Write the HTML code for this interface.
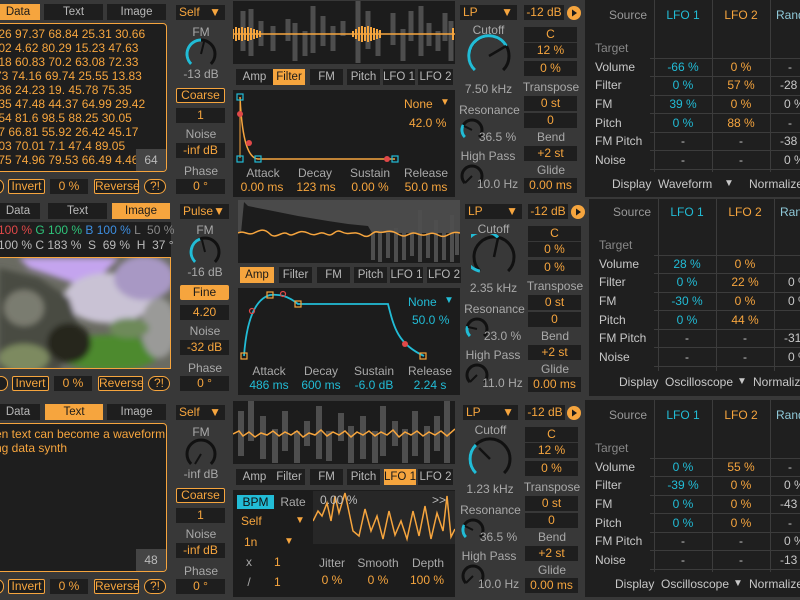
<!DOCTYPE html>
<html><head><meta charset="utf-8">
<style>
*{box-sizing:border-box;margin:0;padding:0}
body{width:800px;height:600px;overflow:hidden;background:#383838;font-family:"Liberation Sans",sans-serif;font-size:12px;position:relative;white-space:nowrap}
.row{position:absolute;left:0;top:0;width:800px;height:200px}
.a{position:absolute}
.bx{position:absolute;background:#1e1e1e;color:#f6a53e;text-align:center;font-size:12px;line-height:15px;height:15px}
.ob{position:absolute;border:1px solid #f6a53e;color:#f6a53e;background:#1e1e1e;text-align:center;font-size:12px;line-height:13px;height:15px;border-radius:2px}
.on{background:#f6a53e !important;color:#1a1a1a !important}
.tab{position:absolute;background:#1e1e1e;color:#b8b8b8;text-align:center;font-size:11.5px;line-height:16px;height:16px;overflow:hidden}
.lb{position:absolute;color:#a9a9a9;text-align:center;font-size:12px;line-height:14px}
.or{color:#f6a53e}.cy{color:#22bcd6}.wh{color:#c8c8c8}
.dark{position:absolute;background:#1c1c1c}
.mm{position:absolute;left:585px;top:0;width:230px;height:197px;background:#1f1f1f}
.vl{position:absolute;top:0;width:1px;height:172px;background:#3c3c3c}
.hl{position:absolute;left:65px;width:170px;height:1px;background:#3c3c3c}
.mt{position:absolute;font-size:12px;line-height:14px;color:#c8c8c8}
.mv{position:absolute;width:58px;text-align:center;font-size:12px;line-height:14px}
.data{position:absolute;color:#f6a53e;font-size:12px;line-height:14px;white-space:nowrap}
</style></head><body>

<!-- ================= ROW 1 ================= -->
<div class="row" style="top:0">
  <div class="tab on" style="left:-4px;top:4px;width:44px">Data</div>
  <div class="tab" style="left:44px;top:4px;width:59px">Text</div>
  <div class="tab" style="left:107px;top:4px;width:59px">Image</div>
  <div class="a" style="left:-6px;top:23px;width:173px;height:149px;border:1px solid #f6a53e;border-radius:4px;background:#1e1e1e;overflow:hidden">
    <div class="data" style="left:0;top:3px;line-height:14px">.26 97.37 68.84 25.31 30.66<br>.02 4.62 80.29 15.23 47.63<br>.18 60.83 70.2 63.08 72.33<br>73 74.16 69.74 25.55 13.83<br>.36 24.23 19. 45.78 75.35<br>.35 47.48 44.37 64.99 29.42<br>.54 81.6 98.5 88.25 30.05<br>.7 66.81 55.92 26.42 45.17<br>.03 70.01 7.1 47.4 89.05<br>.75 74.96 79.53 66.49 4.46</div>
    <div class="a" style="left:141px;top:125px;width:30px;height:22px;background:#444;color:#bbb;text-align:center;line-height:22px">64</div>
  </div>
  <div class="ob" style="left:-10px;top:179px;width:14px;border-radius:8px"></div>
  <div class="ob" style="left:8px;top:179px;width:37px">Invert</div>
  <div class="bx" style="left:50px;top:179px;width:38px">0 %</div>
  <div class="ob" style="left:94px;top:179px;width:45px">Reverse</div>
  <div class="ob" style="left:144px;top:179px;width:22px;border-radius:8px">?!</div>

  <div class="bx" style="left:176px;top:5px;width:49px;text-align:left;padding-left:3px">Self<span style="position:absolute;right:4px">▼</span></div>
  <div class="lb" style="left:176px;top:25px;width:50px">FM</div>
  <svg class="a" style="left:183px;top:36px" width="36" height="36" viewBox="-18 -18 36 36"><path d="M-9.9,9.9 A14,14 0 1 1 9.9,9.9" fill="none" stroke="#111" stroke-width="3"/><path d="M-9.9,9.9 A14,14 0 0 1 0,-14" fill="none" stroke="#22bcd6" stroke-width="3"/><path d="M0 0L3 -12" stroke="#111" stroke-width="2"/></svg>
  <div class="lb" style="left:176px;top:67px;width:50px">-13 dB</div>
  <div class="ob" style="left:176px;top:88px;width:49px">Coarse</div>
  <div class="bx" style="left:176px;top:108px;width:49px">1</div>
  <div class="lb" style="left:176px;top:127px;width:50px">Noise</div>
  <div class="bx" style="left:176px;top:143px;width:49px">-inf dB</div>
  <div class="lb" style="left:176px;top:164px;width:50px">Phase</div>
  <div class="bx" style="left:176px;top:179px;width:49px">0 °</div>

  <svg class="a" style="left:233px;top:1px" width="222" height="63"><rect width="222" height="63" fill="#1c1c1c"/><g stroke="#4e4e4e" stroke-width="5"><path d="M10 10V50M18 8V55M28 20V45M40 25V50M55 18V40M62 22V60M72 30V55M80 5V52M90 15V45M100 25V50M110 20V35M125 0V62M135 10V48M145 30V55M160 12V44M170 28V60M178 10V40M188 5V55M196 22V45M205 30V50M212 12V40M218 20V60"/></g><path d="M0 33H222" stroke="#f6a53e" stroke-width="1.5"/><path d="M0 28V38M3 26V40M6 27V39M9 26V40M12 27V39M15 26V40M18 27V39M21 28V38M24 29V37M27 30V36M120 30V36M123 28V38M126 26V40M129 25V41M132 26V40M135 25V41M138 26V40M141 27V39M144 28V38M147 29V37M220 27V39" stroke="#f6a53e" stroke-width="2"/></svg>

  <div class="tab" style="left:236px;top:69px;width:37px">Amp</div>
  <div class="tab on" style="left:273px;top:69px;width:32px">Filter</div>
  <div class="tab" style="left:310px;top:69px;width:33px">FM</div>
  <div class="tab" style="left:347px;top:69px;width:33px">Pitch</div>
  <div class="tab" style="left:383px;top:69px;width:32px">LFO 1</div>
  <div class="tab" style="left:418px;top:69px;width:35px">LFO 2</div>

  <div class="dark" style="left:233px;top:90px;width:222px;height:107px"></div>
  <svg class="a" style="left:233px;top:90px" width="222" height="107"><path d="M7 7C9 50 15 68 25 69L162 69" fill="none" stroke="#f6a53e" stroke-width="1.5"/><path d="M7 7V68" stroke="#f6a53e" stroke-width="1"/><g fill="none" stroke="#22bcd6" stroke-width="1.2"><rect x="4" y="4" width="6" height="6"/><rect x="4" y="66" width="6" height="6"/><rect x="22" y="66" width="6" height="6"/><rect x="159" y="66" width="6" height="6"/></g><g fill="#e04848"><circle cx="7" cy="24" r="3"/><circle cx="16" cy="53" r="3"/><circle cx="154" cy="69" r="3"/></g></svg>
  <div class="a or" style="left:404px;top:97px">None</div><div class="a or" style="left:440px;top:97px;font-size:10px">▼</div>
  <div class="a or" style="left:409px;top:116px">42.0 %</div>
  <div class="lb" style="left:238px;top:166px;width:50px">Attack</div>
  <div class="lb" style="left:290px;top:166px;width:50px">Decay</div>
  <div class="lb" style="left:345px;top:166px;width:50px">Sustain</div>
  <div class="lb" style="left:401px;top:166px;width:50px">Release</div>
  <div class="lb or" style="left:233px;top:180px;width:58px">0.00 ms</div>
  <div class="lb or" style="left:287px;top:180px;width:58px">123 ms</div>
  <div class="lb or" style="left:341px;top:180px;width:58px">0.00 %</div>
  <div class="lb or" style="left:397px;top:180px;width:58px">50.0 ms</div>

  <div class="bx" style="left:460px;top:5px;width:57px;text-align:left;padding-left:3px">LP<span style="position:absolute;right:4px">▼</span></div>
  <div class="bx" style="left:524px;top:5px;width:40px">-12 dB</div>
  <svg class="a" style="left:567px;top:6px" width="14" height="14"><circle cx="7" cy="7" r="7" fill="#f6a53e"/><path d="M5 3.5L10 7L5 10.5Z" fill="#1a1a1a"/></svg>
  <div class="lb" style="left:460px;top:23px;width:57px">Cutoff</div>
  <svg class="a" style="left:466px;top:33px" width="46" height="46" viewBox="-23 -23 46 46"><path d="M-14.1,14.1 A20,20 0 1 1 14.1,14.1" fill="none" stroke="#111" stroke-width="3"/><path d="M-14.1,14.1 A20,20 0 1 1 17.3,-10" fill="none" stroke="#22bcd6" stroke-width="3"/><path d="M0 0L17 -10" stroke="#111" stroke-width="2.5"/></svg>
  <div class="lb" style="left:460px;top:82px;width:57px">7.50 kHz</div>
  <div class="lb" style="left:458px;top:103px;width:63px">Resonance</div>
  <svg class="a" style="left:459px;top:117px" width="26" height="26" viewBox="-13 -13 26 26"><path d="M-7.1,7.1 A10,10 0 1 1 7.1,7.1" fill="none" stroke="#111" stroke-width="3"/><path d="M-7.1,7.1 A10,10 0 0 1 -8.7,-5" fill="none" stroke="#22bcd6" stroke-width="3"/><path d="M0 0L-8 -4" stroke="#111" stroke-width="2"/></svg>
  <div class="lb" style="left:475px;top:130px;width:45px">36.5 %</div>
  <div class="lb" style="left:458px;top:149px;width:60px">High Pass</div>
  <svg class="a" style="left:459px;top:163px" width="26" height="26" viewBox="-13 -13 26 26"><path d="M-7.1,7.1 A10,10 0 1 1 7.1,7.1" fill="none" stroke="#111" stroke-width="3"/><path d="M0 0L-7 7" stroke="#111" stroke-width="2"/></svg>
  <div class="lb" style="left:475px;top:177px;width:45px">10.0 Hz</div>

  <div class="bx" style="left:524px;top:27px;width:53px">C</div>
  <div class="bx" style="left:524px;top:43px;width:53px">12 %</div>
  <div class="bx" style="left:524px;top:61px;width:53px">0 %</div>
  <div class="lb" style="left:522px;top:80px;width:58px">Transpose</div>
  <div class="bx" style="left:524px;top:96px;width:53px">0 st</div>
  <div class="bx" style="left:524px;top:113px;width:53px">0</div>
  <div class="lb" style="left:522px;top:130px;width:58px">Bend</div>
  <div class="bx" style="left:524px;top:146px;width:53px">+2 st</div>
  <div class="lb" style="left:522px;top:163px;width:58px">Glide</div>
  <div class="bx" style="left:524px;top:178px;width:53px">0.00 ms</div>

  <div class="mm">
    <div class="vl" style="left:69px"></div><div class="vl" style="left:127px"></div><div class="vl" style="left:185px"></div>
    <div class="hl" style="top:58px"></div><div class="hl" style="top:76px"></div><div class="hl" style="top:95px"></div><div class="hl" style="top:113px"></div><div class="hl" style="top:132px"></div><div class="hl" style="top:150px"></div><div class="hl" style="top:169px"></div>
    <div class="mt" style="left:24px;top:8px;color:#999">Source</div>
    <div class="mv cy" style="left:69px;top:8px">LFO 1</div><div class="mv or" style="left:127px;top:8px">LFO 2</div><div class="mv" style="left:185px;top:8px;text-align:left;padding-left:6px;color:#8fc8d8">Rand</div>
    <div class="mt" style="left:10px;top:41px;color:#888">Target</div>
    <div class="mt" style="left:10px;top:60px">Volume</div><div class="mt" style="left:10px;top:78px">Filter</div><div class="mt" style="left:10px;top:97px">FM</div><div class="mt" style="left:10px;top:116px">Pitch</div><div class="mt" style="left:10px;top:134px">FM Pitch</div><div class="mt" style="left:10px;top:153px">Noise</div>
    <div class="mv cy" style="left:69px;top:60px">-66 %</div><div class="mv or" style="left:127px;top:60px">0 %</div><div class="mv wh" style="left:185px;top:60px;text-align:left;padding-left:18px">-</div>
    <div class="mv cy" style="left:69px;top:78px">0 %</div><div class="mv or" style="left:127px;top:78px">57 %</div><div class="mv wh" style="left:185px;top:78px;text-align:left;padding-left:10px">-28</div>
    <div class="mv cy" style="left:69px;top:97px">39 %</div><div class="mv or" style="left:127px;top:97px">0 %</div><div class="mv wh" style="left:185px;top:97px;text-align:left;padding-left:14px">0 %</div>
    <div class="mv cy" style="left:69px;top:116px">0 %</div><div class="mv or" style="left:127px;top:116px">88 %</div><div class="mv wh" style="left:185px;top:116px;text-align:left;padding-left:18px">-</div>
    <div class="mv wh" style="left:69px;top:134px">-</div><div class="mv wh" style="left:127px;top:134px">-</div><div class="mv wh" style="left:185px;top:134px;text-align:left;padding-left:10px">-38</div>
    <div class="mv wh" style="left:69px;top:153px">-</div><div class="mv wh" style="left:127px;top:153px">-</div><div class="mv wh" style="left:185px;top:153px;text-align:left;padding-left:14px">0 %</div>
    <div class="mt" style="left:27px;top:177px">Display</div><div class="mt" style="left:73px;top:177px">Waveform</div><div class="mt" style="left:139px;top:177px;font-size:10px">▼</div><div class="mt" style="left:164px;top:177px">Normalize</div>
  </div>
</div>

<!-- ================= ROW 2 ================= -->
<div class="row" style="top:199px;left:4px">
  <div class="tab" style="left:-8px;top:4px;width:44px">Data</div>
  <div class="tab" style="left:44px;top:4px;width:59px">Text</div>
  <div class="tab on" style="left:108px;top:4px;width:58px">Image</div>
  <div class="dark" style="left:-6px;top:23px;width:173px;height:35px;background:#1e1e1e"></div>
  <div class="a" style="left:-6px;top:24px;font-size:12px;line-height:15px;white-space:nowrap"><span style="color:#e04848">100 %</span> <span style="color:#2ec47a">G 100 %</span> <span style="color:#3d8ee0">B 100 %</span> <span style="color:#888">L &nbsp;50 %</span><br><span style="color:#bbb">100 % C 183 % &nbsp;S &nbsp;69 % &nbsp;H &nbsp;37 °</span></div>
  <div class="a" style="left:-6px;top:58px;width:173px;height:112px;border:1px solid #f6a53e;overflow:hidden;background:#6a6a5e">
    <svg width="173" height="112"><defs><filter id="bl"><feGaussianBlur stdDeviation="3"/></filter></defs>
    <rect width="173" height="112" fill="#6a6b62"/>
    <g filter="url(#bl)"><path d="M20 0H120L90 30 60 20 30 10Z" fill="#c4a4ee"/><ellipse cx="110" cy="40" rx="45" ry="25" fill="#c9c2d4"/><ellipse cx="145" cy="20" rx="30" ry="22" fill="#a898c4"/><path d="M0 10L40 20 70 40 80 70 60 112H0Z" fill="#4a4b42"/><ellipse cx="25" cy="50" rx="20" ry="18" fill="#7a7c70"/><ellipse cx="110" cy="95" rx="50" ry="18" fill="#4d8a2e"/><ellipse cx="70" cy="85" rx="22" ry="20" fill="#25271e"/><ellipse cx="160" cy="70" rx="18" ry="30" fill="#9a9a98"/><ellipse cx="25" cy="100" rx="25" ry="14" fill="#7d8a60"/><ellipse cx="130" cy="70" rx="20" ry="10" fill="#6e8a5a"/></g></svg>
  </div>
  <div class="ob" style="left:-10px;top:177px;width:14px;border-radius:8px"></div>
  <div class="ob" style="left:8px;top:177px;width:37px">Invert</div>
  <div class="bx" style="left:50px;top:177px;width:38px">0 %</div>
  <div class="ob" style="left:94px;top:177px;width:45px">Reverse</div>
  <div class="ob" style="left:144px;top:177px;width:22px;border-radius:8px">?!</div>

  <div class="bx" style="left:176px;top:5px;width:49px;text-align:left;padding-left:3px">Pulse<span style="position:absolute;right:4px">▼</span></div>
  <div class="lb" style="left:176px;top:24px;width:50px">FM</div>
  <svg class="a" style="left:183px;top:35px" width="36" height="36" viewBox="-18 -18 36 36"><path d="M-9.9,9.9 A14,14 0 1 1 9.9,9.9" fill="none" stroke="#111" stroke-width="3"/><path d="M-9.9,9.9 A14,14 0 0 1 -5,-13" fill="none" stroke="#22bcd6" stroke-width="3"/><path d="M0 0L-3 -12" stroke="#111" stroke-width="2"/></svg>
  <div class="lb" style="left:176px;top:66px;width:50px">-16 dB</div>
  <div class="ob on" style="left:176px;top:86px;width:49px">Fine</div>
  <div class="bx" style="left:176px;top:106px;width:49px">4.20</div>
  <div class="lb" style="left:176px;top:125px;width:50px">Noise</div>
  <div class="bx" style="left:176px;top:141px;width:49px">-32 dB</div>
  <div class="lb" style="left:176px;top:162px;width:50px">Phase</div>
  <div class="bx" style="left:176px;top:177px;width:49px">0 °</div>

  <svg class="a" style="left:234px;top:1px" width="222" height="63"><rect width="222" height="63" fill="#1c1c1c"/><path d="M0 0H222V33H134L130 26L110 24L90 21L60 16L30 10L10 6L6 2L3 33H0Z" fill="#4a4a4a"/><g stroke="#4e4e4e" stroke-width="4"><path d="M135 33V60M142 30V62M150 33V58M158 28V62M166 33V60M174 30V56M182 10V62M190 33V58M198 20V62M206 33V60M214 15V62M219 33V55"/></g><path d="M0 33C6 30 10 36 16 33S26 28 32 34 44 30 50 34 60 28 70 33 80 30 88 34 96 28 104 32 116 30 124 35 134 30 140 32 150 28 160 34 170 30 180 34 190 30 200 35 210 30 222 33" fill="none" stroke="#f6a53e" stroke-width="1.5"/></svg>

  <div class="tab on" style="left:236px;top:68px;width:34px">Amp</div>
  <div class="tab" style="left:275px;top:68px;width:33px">Filter</div>
  <div class="tab" style="left:313px;top:68px;width:33px">FM</div>
  <div class="tab" style="left:350px;top:68px;width:33px">Pitch</div>
  <div class="tab" style="left:386px;top:68px;width:33px">LFO 1</div>
  <div class="tab" style="left:423px;top:68px;width:34px">LFO 2</div>

  <div class="dark" style="left:234px;top:89px;width:222px;height:107px"></div>
  <svg class="a" style="left:234px;top:89px" width="222" height="107"><path d="M6 68C8 40 14 12 32 7C42 6 50 8 60 16L150 16C156 40 160 56 186 68" fill="none" stroke="#22bcd6" stroke-width="1.8"/><g fill="none" stroke="#f6a53e" stroke-width="1.2"><rect x="3" y="65" width="6" height="6"/><rect x="29" y="4" width="6" height="6"/><rect x="57" y="13" width="6" height="6"/><rect x="182" y="65" width="6" height="6"/></g><g fill="none" stroke="#e04848" stroke-width="1.2"><circle cx="14" cy="23" r="2.5"/><circle cx="45" cy="6" r="2.5"/></g><circle cx="167" cy="56" r="3" fill="#e04848"/></svg>
  <div class="a cy" style="left:404px;top:96px">None</div><div class="a cy" style="left:440px;top:96px;font-size:10px">▼</div>
  <div class="a cy" style="left:408px;top:114px">50.0 %</div>
  <div class="lb" style="left:240px;top:165px;width:50px">Attack</div>
  <div class="lb" style="left:292px;top:165px;width:50px">Decay</div>
  <div class="lb" style="left:345px;top:165px;width:50px">Sustain</div>
  <div class="lb" style="left:401px;top:165px;width:50px">Release</div>
  <div class="lb cy" style="left:236px;top:179px;width:58px">486 ms</div>
  <div class="lb cy" style="left:288px;top:179px;width:58px">600 ms</div>
  <div class="lb cy" style="left:341px;top:179px;width:58px">-6.0 dB</div>
  <div class="lb cy" style="left:397px;top:179px;width:58px">2.24 s</div>

  <div class="bx" style="left:461px;top:5px;width:57px;text-align:left;padding-left:3px">LP<span style="position:absolute;right:4px">▼</span></div>
  <div class="bx" style="left:524px;top:5px;width:40px">-12 dB</div>
  <svg class="a" style="left:567px;top:6px" width="14" height="14"><circle cx="7" cy="7" r="7" fill="#f6a53e"/><path d="M5 3.5L10 7L5 10.5Z" fill="#1a1a1a"/></svg>
  <div class="lb" style="left:461px;top:23px;width:57px">Cutoff</div>
  <svg class="a" style="left:467px;top:35px" width="46" height="46" viewBox="-23 -23 46 46"><path d="M-14.1,14.1 A20,20 0 1 1 14.1,14.1" fill="none" stroke="#111" stroke-width="3"/><path d="M-14.1,14.1 A20,20 0 1 1 4,-19.6" fill="none" stroke="#22bcd6" stroke-width="3"/><path d="M0 0L4 -19" stroke="#111" stroke-width="2.5"/></svg>
  <div class="lb" style="left:461px;top:82px;width:57px">2.35 kHz</div>
  <div class="lb" style="left:459px;top:103px;width:63px">Resonance</div>
  <svg class="a" style="left:460px;top:117px" width="26" height="26" viewBox="-13 -13 26 26"><path d="M-7.1,7.1 A10,10 0 1 1 7.1,7.1" fill="none" stroke="#111" stroke-width="3"/><path d="M-7.1,7.1 A10,10 0 0 1 -9.6,-2.6" fill="none" stroke="#22bcd6" stroke-width="3"/><path d="M0 0L-9 -2" stroke="#111" stroke-width="2"/></svg>
  <div class="lb" style="left:476px;top:130px;width:45px">23.0 %</div>
  <div class="lb" style="left:459px;top:149px;width:60px">High Pass</div>
  <svg class="a" style="left:460px;top:163px" width="26" height="26" viewBox="-13 -13 26 26"><path d="M-7.1,7.1 A10,10 0 1 1 7.1,7.1" fill="none" stroke="#111" stroke-width="3"/><path d="M0 0L-7 7" stroke="#111" stroke-width="2"/></svg>
  <div class="lb" style="left:476px;top:177px;width:45px">11.0 Hz</div>

  <div class="bx" style="left:524px;top:27px;width:53px">C</div>
  <div class="bx" style="left:524px;top:43px;width:53px">0 %</div>
  <div class="bx" style="left:524px;top:61px;width:53px">0 %</div>
  <div class="lb" style="left:522px;top:80px;width:58px">Transpose</div>
  <div class="bx" style="left:524px;top:96px;width:53px">0 st</div>
  <div class="bx" style="left:524px;top:113px;width:53px">0</div>
  <div class="lb" style="left:522px;top:130px;width:58px">Bend</div>
  <div class="bx" style="left:524px;top:146px;width:53px">+2 st</div>
  <div class="lb" style="left:522px;top:163px;width:58px">Glide</div>
  <div class="bx" style="left:524px;top:178px;width:53px">0.00 ms</div>

  <div class="mm">
    <div class="vl" style="left:69px"></div><div class="vl" style="left:127px"></div><div class="vl" style="left:185px"></div>
    <div class="hl" style="top:56px"></div><div class="hl" style="top:74px"></div><div class="hl" style="top:93px"></div><div class="hl" style="top:111px"></div><div class="hl" style="top:130px"></div><div class="hl" style="top:148px"></div><div class="hl" style="top:167px"></div>
    <div class="mt" style="left:24px;top:6px;color:#999">Source</div>
    <div class="mv cy" style="left:69px;top:6px">LFO 1</div><div class="mv or" style="left:127px;top:6px">LFO 2</div><div class="mv" style="left:185px;top:6px;text-align:left;padding-left:6px;color:#8fc8d8">Rand</div>
    <div class="mt" style="left:10px;top:39px;color:#888">Target</div>
    <div class="mt" style="left:10px;top:58px">Volume</div><div class="mt" style="left:10px;top:76px">Filter</div><div class="mt" style="left:10px;top:95px">FM</div><div class="mt" style="left:10px;top:114px">Pitch</div><div class="mt" style="left:10px;top:132px">FM Pitch</div><div class="mt" style="left:10px;top:151px">Noise</div>
    <div class="mv cy" style="left:69px;top:58px">28 %</div><div class="mv or" style="left:127px;top:58px">0 %</div>
    <div class="mv cy" style="left:69px;top:76px">0 %</div><div class="mv or" style="left:127px;top:76px">22 %</div><div class="mv wh" style="left:185px;top:76px;text-align:left;padding-left:14px">0 %</div>
    <div class="mv cy" style="left:69px;top:95px">-30 %</div><div class="mv or" style="left:127px;top:95px">0 %</div><div class="mv wh" style="left:185px;top:95px;text-align:left;padding-left:14px">0 %</div>
    <div class="mv cy" style="left:69px;top:114px">0 %</div><div class="mv or" style="left:127px;top:114px">44 %</div>
    <div class="mv wh" style="left:69px;top:132px">-</div><div class="mv wh" style="left:127px;top:132px">-</div><div class="mv wh" style="left:185px;top:132px;text-align:left;padding-left:10px">-31</div>
    <div class="mv wh" style="left:69px;top:151px">-</div><div class="mv wh" style="left:127px;top:151px">-</div><div class="mv wh" style="left:185px;top:151px;text-align:left;padding-left:14px">0 %</div>
    <div class="mt" style="left:30px;top:176px">Display</div><div class="mt" style="left:76px;top:176px">Oscilloscope</div><div class="mt" style="left:148px;top:176px;font-size:10px">▼</div><div class="mt" style="left:164px;top:176px">Normalize</div>
  </div>
</div>

<!-- ================= ROW 3 ================= -->
<div class="row" style="top:400px">
  <div class="tab" style="left:-4px;top:4px;width:44px">Data</div>
  <div class="tab on" style="left:45px;top:4px;width:58px">Text</div>
  <div class="tab" style="left:107px;top:4px;width:59px">Image</div>
  <div class="a" style="left:-6px;top:23px;width:173px;height:149px;border:1px solid #f6a53e;border-radius:4px;background:#1e1e1e;overflow:hidden">
    <div class="data" style="left:0;top:3px;line-height:14px">en text can become a waveform<br>ng data synth</div>
    <div class="a" style="left:141px;top:125px;width:30px;height:22px;background:#444;color:#bbb;text-align:center;line-height:22px">48</div>
  </div>
  <div class="ob" style="left:-10px;top:179px;width:14px;border-radius:8px"></div>
  <div class="ob" style="left:8px;top:179px;width:37px">Invert</div>
  <div class="bx" style="left:50px;top:179px;width:38px">0 %</div>
  <div class="ob" style="left:94px;top:179px;width:45px">Reverse</div>
  <div class="ob" style="left:144px;top:179px;width:22px;border-radius:8px">?!</div>

  <div class="bx" style="left:176px;top:5px;width:49px;text-align:left;padding-left:3px">Self<span style="position:absolute;right:4px">▼</span></div>
  <div class="lb" style="left:176px;top:25px;width:50px">FM</div>
  <svg class="a" style="left:183px;top:36px" width="36" height="36" viewBox="-18 -18 36 36"><path d="M-9.9,9.9 A14,14 0 1 1 9.9,9.9" fill="none" stroke="#111" stroke-width="3"/><path d="M0 0L-6 10" stroke="#111" stroke-width="2"/></svg>
  <div class="lb" style="left:176px;top:67px;width:50px">-inf dB</div>
  <div class="ob" style="left:176px;top:88px;width:49px">Coarse</div>
  <div class="bx" style="left:176px;top:108px;width:49px">1</div>
  <div class="lb" style="left:176px;top:127px;width:50px">Noise</div>
  <div class="bx" style="left:176px;top:143px;width:49px">-inf dB</div>
  <div class="lb" style="left:176px;top:164px;width:50px">Phase</div>
  <div class="bx" style="left:176px;top:179px;width:49px">0 °</div>

  <svg class="a" style="left:233px;top:1px" width="222" height="63"><rect width="222" height="63" fill="#1c1c1c"/><g stroke="#4e4e4e" stroke-width="6"><path d="M8 10V55M18 0V40M30 15V58M42 28V62M52 10V50M64 30V62M74 20V45M86 5V58M96 30V60M108 12V40M118 25V62M130 15V58M142 30V62M150 5V55M162 20V45M172 28V62M182 10V55M194 25V62M204 15V50M214 0V62"/></g><path d="M0 33L6 30 10 35 16 31 22 36 28 32 34 34 40 30 46 35 52 31 58 34 64 30 70 36 76 32 82 34 88 29 94 35 100 31 106 34 112 30 118 36 124 31 130 34 136 30 142 35 148 31 154 34 160 29 166 36 172 31 178 34 184 30 190 35 196 31 202 34 208 30 214 35 222 28" fill="none" stroke="#f6a53e" stroke-width="1.5"/></svg>

  <div class="tab" style="left:236px;top:69px;width:37px">Amp</div>
  <div class="tab" style="left:273px;top:69px;width:32px">Filter</div>
  <div class="tab" style="left:310px;top:69px;width:33px">FM</div>
  <div class="tab" style="left:347px;top:69px;width:33px">Pitch</div>
  <div class="tab on" style="left:384px;top:69px;width:32px">LFO 1</div>
  <div class="tab" style="left:418px;top:69px;width:35px">LFO 2</div>

  <div class="dark" style="left:233px;top:90px;width:222px;height:107px"></div>
  <div class="a" style="left:237px;top:95px;width:37px;height:14px;background:#22bcd6;color:#111;text-align:center;line-height:14px">BPM</div>
  <div class="lb" style="left:278px;top:95px;width:30px">Rate</div>
  <div class="a or" style="left:241px;top:114px">Self</div><div class="a or" style="left:295px;top:115px;font-size:10px">▼</div>
  <div class="a or" style="left:244px;top:135px">1n</div><div class="a or" style="left:284px;top:136px;font-size:10px">▼</div>
  <div class="lb" style="left:245px;top:155px;width:8px">x</div><div class="a or" style="left:274px;top:155px">1</div>
  <div class="lb" style="left:245px;top:175px;width:8px">/</div><div class="a or" style="left:274px;top:175px">1</div>
  <svg class="a" style="left:313px;top:91px" width="142" height="53"><rect width="142" height="53" fill="#272727"/><path d="M0 30L5 20 9 25 14 12 18 30 22 5 26 22 32 2 40 40 46 45 52 18 58 40 64 25 70 48 76 20 82 44 88 30 94 48 100 20 106 45 112 15 118 48 124 22 130 40 134 5 138 46 142 38" fill="none" stroke="#f6a53e" stroke-width="1.5"/></svg>
  <div class="a" style="left:320px;top:93px;color:#bbb">0.00 %</div>
  <div class="a" style="left:432px;top:93px;color:#bbb">&gt;&gt;</div>
  <div class="lb" style="left:312px;top:156px;width:40px">Jitter</div>
  <div class="lb" style="left:356px;top:156px;width:44px">Smooth</div>
  <div class="lb" style="left:406px;top:156px;width:44px">Depth</div>
  <div class="lb or" style="left:312px;top:173px;width:40px">0 %</div>
  <div class="lb or" style="left:356px;top:173px;width:44px">0 %</div>
  <div class="lb or" style="left:404px;top:173px;width:46px">100 %</div>

  <div class="bx" style="left:463px;top:5px;width:55px;text-align:left;padding-left:3px">LP<span style="position:absolute;right:4px">▼</span></div>
  <div class="bx" style="left:525px;top:5px;width:40px">-12 dB</div>
  <svg class="a" style="left:567px;top:6px" width="14" height="14"><circle cx="7" cy="7" r="7" fill="#f6a53e"/><path d="M5 3.5L10 7L5 10.5Z" fill="#1a1a1a"/></svg>
  <div class="lb" style="left:462px;top:23px;width:57px">Cutoff</div>
  <svg class="a" style="left:467px;top:36px" width="46" height="46" viewBox="-23 -23 46 46"><path d="M-14.1,14.1 A20,20 0 1 1 14.1,14.1" fill="none" stroke="#111" stroke-width="3"/><path d="M-14.1,14.1 A20,20 0 0 1 -14.1,-14.1" fill="none" stroke="#22bcd6" stroke-width="3"/><path d="M0 0L-11 -11" stroke="#111" stroke-width="2.5"/></svg>
  <div class="lb" style="left:460px;top:82px;width:60px">1.23 kHz</div>
  <div class="lb" style="left:459px;top:103px;width:63px">Resonance</div>
  <svg class="a" style="left:460px;top:117px" width="26" height="26" viewBox="-13 -13 26 26"><path d="M-7.1,7.1 A10,10 0 1 1 7.1,7.1" fill="none" stroke="#111" stroke-width="3"/><path d="M-7.1,7.1 A10,10 0 0 1 -8.7,-5" fill="none" stroke="#22bcd6" stroke-width="3"/><path d="M0 0L-8 -4" stroke="#111" stroke-width="2"/></svg>
  <div class="lb" style="left:476px;top:130px;width:45px">36.5 %</div>
  <div class="lb" style="left:459px;top:149px;width:60px">High Pass</div>
  <svg class="a" style="left:460px;top:163px" width="26" height="26" viewBox="-13 -13 26 26"><path d="M-7.1,7.1 A10,10 0 1 1 7.1,7.1" fill="none" stroke="#111" stroke-width="3"/><path d="M0 0L-7 7" stroke="#111" stroke-width="2"/></svg>
  <div class="lb" style="left:476px;top:177px;width:45px">10.0 Hz</div>

  <div class="bx" style="left:525px;top:27px;width:53px">C</div>
  <div class="bx" style="left:525px;top:43px;width:53px">12 %</div>
  <div class="bx" style="left:525px;top:61px;width:53px">0 %</div>
  <div class="lb" style="left:523px;top:80px;width:58px">Transpose</div>
  <div class="bx" style="left:525px;top:96px;width:53px">0 st</div>
  <div class="bx" style="left:525px;top:113px;width:53px">0</div>
  <div class="lb" style="left:523px;top:130px;width:58px">Bend</div>
  <div class="bx" style="left:525px;top:146px;width:53px">+2 st</div>
  <div class="lb" style="left:523px;top:163px;width:58px">Glide</div>
  <div class="bx" style="left:525px;top:178px;width:53px">0.00 ms</div>

  <div class="mm">
    <div class="vl" style="left:69px"></div><div class="vl" style="left:127px"></div><div class="vl" style="left:185px"></div>
    <div class="hl" style="top:58px"></div><div class="hl" style="top:76px"></div><div class="hl" style="top:95px"></div><div class="hl" style="top:113px"></div><div class="hl" style="top:132px"></div><div class="hl" style="top:150px"></div><div class="hl" style="top:169px"></div>
    <div class="mt" style="left:24px;top:8px;color:#999">Source</div>
    <div class="mv cy" style="left:69px;top:8px">LFO 1</div><div class="mv or" style="left:127px;top:8px">LFO 2</div><div class="mv" style="left:185px;top:8px;text-align:left;padding-left:6px;color:#8fc8d8">Rand</div>
    <div class="mt" style="left:10px;top:41px;color:#888">Target</div>
    <div class="mt" style="left:10px;top:60px">Volume</div><div class="mt" style="left:10px;top:78px">Filter</div><div class="mt" style="left:10px;top:97px">FM</div><div class="mt" style="left:10px;top:116px">Pitch</div><div class="mt" style="left:10px;top:134px">FM Pitch</div><div class="mt" style="left:10px;top:153px">Noise</div>
    <div class="mv cy" style="left:69px;top:60px">0 %</div><div class="mv or" style="left:127px;top:60px">55 %</div><div class="mv wh" style="left:185px;top:60px;text-align:left;padding-left:18px">-</div>
    <div class="mv cy" style="left:69px;top:78px">-39 %</div><div class="mv or" style="left:127px;top:78px">0 %</div><div class="mv wh" style="left:185px;top:78px;text-align:left;padding-left:14px">0 %</div>
    <div class="mv cy" style="left:69px;top:97px">0 %</div><div class="mv or" style="left:127px;top:97px">0 %</div><div class="mv wh" style="left:185px;top:97px;text-align:left;padding-left:10px">-43</div>
    <div class="mv cy" style="left:69px;top:116px">0 %</div><div class="mv or" style="left:127px;top:116px">0 %</div><div class="mv wh" style="left:185px;top:116px;text-align:left;padding-left:18px">-</div>
    <div class="mv wh" style="left:69px;top:134px">-</div><div class="mv wh" style="left:127px;top:134px">-</div><div class="mv wh" style="left:185px;top:134px;text-align:left;padding-left:14px">0 %</div>
    <div class="mv wh" style="left:69px;top:153px">-</div><div class="mv wh" style="left:127px;top:153px">-</div><div class="mv wh" style="left:185px;top:153px;text-align:left;padding-left:10px">-13</div>
    <div class="mt" style="left:30px;top:177px">Display</div><div class="mt" style="left:76px;top:177px">Oscilloscope</div><div class="mt" style="left:148px;top:177px;font-size:10px">▼</div><div class="mt" style="left:164px;top:177px">Normalize</div>
  </div>
</div>
</body></html>
